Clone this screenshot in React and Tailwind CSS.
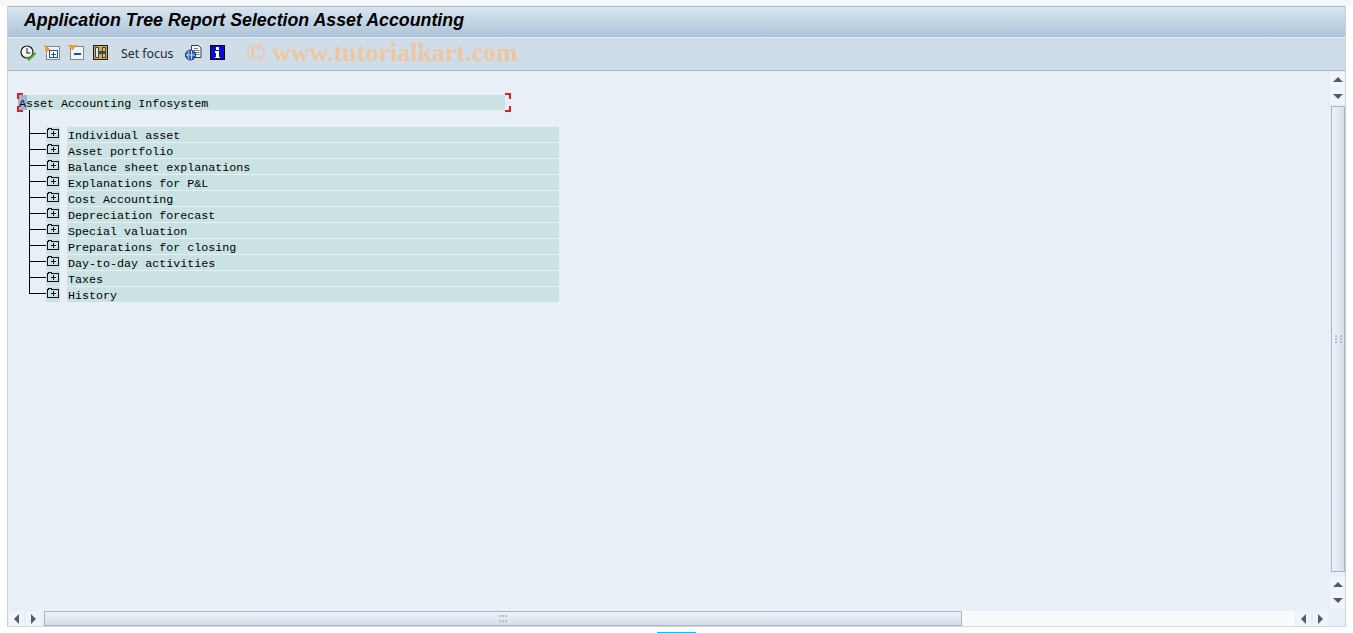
import React from 'react';

const treeItems = [
  'Individual asset',
  'Asset portfolio',
  'Balance sheet explanations',
  'Explanations for P&L',
  'Cost Accounting',
  'Depreciation forecast',
  'Special valuation',
  'Preparations for closing',
  'Day-to-day activities',
  'Taxes',
  'History',
];

const ClockCheckIcon = () => (
  <svg width="17" height="16" viewBox="0 0 17 16">
    <circle cx="7" cy="7" r="6" fill="#f4f6f8" stroke="#1a1a1a" strokeWidth="1.2" />
    <path d="M6.500 3h1v4.500h3v1h-4z" fill="#1a1a1a" />
    <path d="M6.500 12 L9 14.500 L15.500 8" fill="none" stroke="#5aa02c" strokeWidth="2.2" />
  </svg>
);

const TableIcon = ({ minus }) => (
  <svg width="17" height="15" viewBox="0 0 17 15" shapeRendering="crispEdges">
    <rect x="2.500" y="1.500" width="13" height="12.500" fill="#f2f5f8" stroke="#7d8a96" />
    {minus ? (
      <>
        <path d="M0 0h9l-4.500 5z" fill="#f0a030" />
        <path d="M6 8h7v2H6z" fill="#1f4fa8" />
      </>
    ) : (
      <>
        <rect x="5.500" y="5.500" width="8" height="7" fill="#fff" stroke="#1f4fa8" />
        <path d="M9 6.500h1v5H9zM7 8.500h5v1H7z" fill="#1f4fa8" />
        <path d="M0 0l6 4-4 4z" fill="#f0a030" />
      </>
    )}
  </svg>
);

const FindIcon = () => (
  <svg width="15" height="15" viewBox="0 0 15 15" shapeRendering="crispEdges">
    <rect x="0.500" y="0.500" width="14" height="14" fill="#e0a52c" stroke="#1c1c1c" />
    <path d="M2 2h4v11H2zM9 2h4v11H9z" fill="#39465c" />
    <path d="M6 6h3v3H6z" fill="#39465c" />
    <path d="M10 3h2v3h-2zM10 9h2v3h-2z" fill="#f0c45c" />
    <path d="M3 3h2v9H3z" fill="#dfe6ee" />
  </svg>
);

const DocGlobeIcon = () => (
  <svg width="17" height="16" viewBox="0 0 17 16">
    <path d="M6.500 0.500h7l2.500 2.500v9.500h-9.500z" fill="#f7f8fa" stroke="#3a3f48" />
    <path d="M9 3.500h4M9 5.500h5.500M9 7.500h5.500M9 9.500h5.500" stroke="#6f7a88" />
    <circle cx="5.500" cy="10" r="5" fill="#2d62c8" stroke="#13264f" />
    <path d="M4 5.500c-1.500 2-1.500 7 0 9M6.500 5.500v9M1 10h9" stroke="#cfdcf4" fill="none" />
  </svg>
);

const InfoIcon = () => (
  <svg width="15" height="15" viewBox="0 0 15 15" shapeRendering="crispEdges">
    <rect width="15" height="15" fill="#000" />
    <rect x="1" y="1" width="13" height="13" fill="#0a0ad8" />
    <path d="M6 2h3v2.500H6zM5 6h4v5.500h1V13H5v-1.500h1V7.500H5z" fill="#fff" />
  </svg>
);

const FolderIcon = () => (
  <svg width="12" height="10" viewBox="0 0 12 10" shapeRendering="crispEdges">
    <path d="M0.500 9.500V1.500h1v-1h3v1h7v8z" fill="none" stroke="#111" />
    <path d="M6 3h1v2h2v1H7v2H6V6H4V5h2z" fill="#111" />
  </svg>
);

const Arrow = ({ dir }) => {
  const points = {
    up: '0,5 5,0 10,5',
    down: '0,0 10,0 5,5',
    left: '5,0 5,10 0,5',
    right: '0,0 5,5 0,10',
  };
  const vertical = dir === 'up' || dir === 'down';
  return (
    <svg width={vertical ? 10 : 5} height={vertical ? 5 : 10} viewBox={vertical ? '0 0 10 5' : '0 0 5 10'}>
      <polygon points={points[dir]} fill="#4c5f70" />
    </svg>
  );
};

const ScrollBtn = ({ dir, className }) => (
  <div className={`flex items-center justify-center bg-[#f1f5fa] ${className}`}>
    <Arrow dir={dir} />
  </div>
);

const Grip = ({ vertical }) => (
  <svg width={vertical ? 7 : 8} height={vertical ? 8 : 7} viewBox={vertical ? '0 0 7 8' : '0 0 8 7'}>
    {vertical ? (
      <path d="M0 0h2v2H0zM5 0h2v2H5zM0 3h2v2H0zM5 3h2v2H5zM0 6h2v2H0zM5 6h2v2H5z" fill="#b4c0cc" />
    ) : (
      <path d="M0 0h2v2H0zM3 0h2v2H3zM6 0h2v2H6zM0 5h2v2H0zM3 5h2v2H3zM6 5h2v2H6z" fill="#b4c0cc" />
    )}
  </svg>
);

export default function App() {
  return (
    <div className="w-[1353px] h-[633px] overflow-hidden bg-white flex flex-col pl-[7px] pr-[7px] font-['Liberation_Sans',sans-serif]">
      <div className="h-[6px] bg-[#f6f7f9] -mx-[7px] shrink-0" />

      <div className="flex-1 min-h-0 flex flex-col border-l border-r border-[#c9d2dc]">
        {/* title bar */}
        <div className="h-[31px] shrink-0 flex items-center pl-4 pb-[2px] border-t border-[#a6b3c3] bg-gradient-to-b from-[#d8e5f0] to-[#adc3d9]">
          <span className="text-[17.800px] font-bold italic text-black leading-none">
            Application Tree Report Selection Asset Accounting
          </span>
        </div>

        {/* toolbar */}
        <div className="h-[34px] shrink-0 flex items-center pl-[12px] pb-[3px] border-t border-[#e4edf4] border-b border-b-[#a9b7c7] bg-[#cfdde8]">
          <ClockCheckIcon />
          <div className="ml-[7px] flex"><TableIcon /></div>
          <div className="ml-[7px] flex"><TableIcon minus /></div>
          <div className="ml-[8px] flex"><FindIcon /></div>
          <span className="ml-[13px] mt-[4px] text-[12.300px] text-[#1c2a3a] font-['Noto_Sans',sans-serif]">Set focus</span>
          <div className="ml-[12px] flex"><DocGlobeIcon /></div>
          <div className="ml-[8px] flex"><InfoIcon /></div>
          <span className="ml-[21px] text-[26px] font-bold text-[#ecc7a0] font-['Liberation_Serif',serif] leading-none">
            © www.tutorialkart.com
          </span>
        </div>

        {/* tree area + vertical scrollbar */}
        <div className="flex-1 min-h-0 flex bg-[#e8eff7]">
          <div className="flex-1 min-w-0 pt-[24px] pl-[10px] font-['Liberation_Mono',monospace] text-[11.700px] leading-[15px] text-black">
            <div className="relative w-[487px] h-[15px] bg-[#cae2e2] whitespace-pre pt-[2px] pl-px">
              <div className="absolute left-0 top-0 w-[9px] h-[15px] bg-[#9db5d5]" />
              <span className="relative">Asset Accounting Infosystem</span>
              <div className="absolute -left-px -top-[2px] w-[6px] h-[6px] border-l-2 border-t-2 border-[#e02020]" />
              <div className="absolute -left-px -bottom-[2px] w-[6px] h-[6px] border-l-2 border-b-2 border-[#e02020]" />
              <div className="absolute -right-[6px] -top-[2px] w-[6px] h-[6px] border-r-2 border-t-2 border-[#e02020]" />
              <div className="absolute -right-[6px] -bottom-[2px] w-[6px] h-[6px] border-r-2 border-b-2 border-[#e02020]" />
            </div>
            <div className="ml-[11px] h-[17px] border-l border-black" />
            <div className="ml-[11px] flex flex-col">
              {treeItems.map((item, i) => (
                <div key={item} className="flex h-4">
                  <div className="w-[17px] flex flex-col shrink-0">
                    <div className="h-[7px] border-l border-b border-black" />
                    {i < treeItems.length - 1 && <div className="flex-1 border-l border-black" />}
                  </div>
                  <div className="w-[14px] h-[15px] bg-[#cae2e2] flex justify-center pt-px">
                    <FolderIcon />
                  </div>
                  <div className="ml-[7px] w-[492px] h-[15px] bg-[#cae2e2] pl-px pt-[2px] whitespace-pre">{item}</div>
                </div>
              ))}
            </div>
          </div>

          <div className="w-[15px] flex flex-col shrink-0 pt-px">
            <ScrollBtn dir="up" className="h-[15px]" />
            <ScrollBtn dir="down" className="h-[15px] mt-[2px]" />
            <div className="flex-1 mt-[2px] ml-px mb-[5px] border border-[#a9b5c2] bg-gradient-to-r from-[#eef3f8] to-[#d5e0ea] flex items-center justify-center">
              <Grip vertical />
            </div>
            <ScrollBtn dir="up" className="h-[15px]" />
            <ScrollBtn dir="down" className="h-[15px] mt-px mb-[3px]" />
          </div>
        </div>

        {/* horizontal scrollbar */}
        <div className="h-[16px] shrink-0 flex bg-[#e8eff7] border-b border-[#d3d9e0]">
          <ScrollBtn dir="left" className="w-[15px] ml-[1px]" />
          <ScrollBtn dir="right" className="w-[15px] ml-[2px]" />
          <div className="ml-[3px] flex-1 flex bg-[#f8fafc]">
            <div className="w-[918px] border border-[#a9b5c2] bg-gradient-to-b from-[#eef3f8] to-[#d3dfe9] flex items-center justify-center">
              <Grip />
            </div>
          </div>
          <ScrollBtn dir="left" className="w-[15px] ml-px" />
          <ScrollBtn dir="right" className="w-[15px] ml-[2px] mr-[17px]" />
        </div>
      </div>

      {/* status strip */}
      <div className="h-[6px] shrink-0 flex items-end justify-center">
        <div className="w-[39px] h-px bg-[#10bdf5]" />
      </div>
    </div>
  );
}
